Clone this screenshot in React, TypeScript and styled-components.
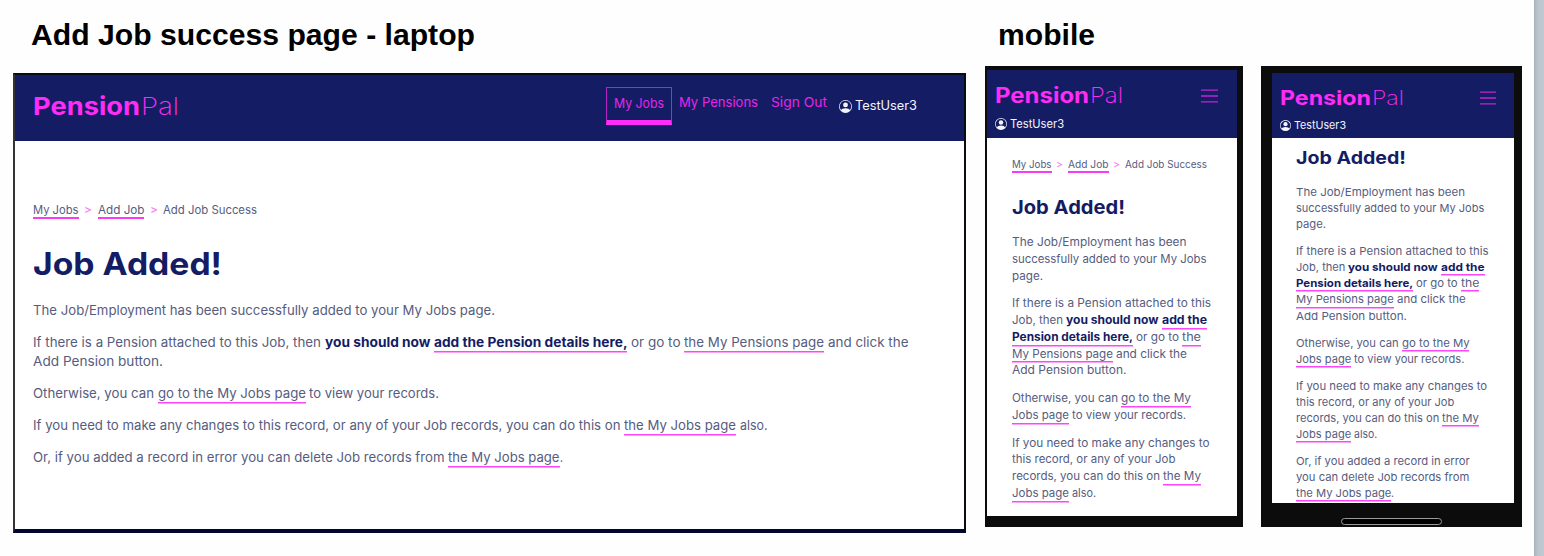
import React, { useLayoutEffect, useRef, useState } from "react";
import styled, { createGlobalStyle } from "styled-components";
import { BsPersonCircle } from "react-icons/bs";

const NAVY = "#141c64";
const PINK = "#ff2bf7";
const INK = "#565c80";

const GlobalStyle = createGlobalStyle`
  * { box-sizing: border-box; }
  body { margin: 0; background: #fefefe; font-family: Inter, sans-serif; overflow: hidden; }
  h1, h2, p { margin: 0; }
`;

const Board = styled.main`
  display: flex;
  width: 1544px;
  height: 556px;
  background: #fefefe;
`;

const Group = styled.section<{ $left: number }>`
  padding-left: ${(p) => p.$left}px;
`;

const Caption = styled.h2<{ $indent: number; $gap: number }>`
  height: ${(p) => p.$gap}px;
  padding: 17px 0 0 ${(p) => p.$indent}px;
  font: 700 30px/36px "Liberation Sans", Arial, sans-serif;
  color: #000;
`;

const Phones = styled.div`
  display: flex;
  gap: 18px;
`;

const SideStrip = styled.div`
  width: 10px;
  margin-left: auto;
  background: linear-gradient(90deg, #a9b2bc, #bcc4ce 40%, #c2c9d3);
`;

const FitBox = styled.span`
  display: inline-block;
  vertical-align: top;
  white-space: pre;
`;

const FitText = styled.span`
  display: inline-block;
  vertical-align: top;
  transform-origin: 0 50%;
`;

/* Widens or narrows a run of text so that it fills the given width. */
function Fit({ w, children }: { w: number; children: string }) {
  const ref = useRef<HTMLSpanElement>(null);
  const [scale, setScale] = useState(1);
  useLayoutEffect(() => {
    const el = ref.current;
    if (!el) return;
    const range = document.createRange();
    range.selectNodeContents(el);
    el.style.transform = "none";
    const natural = range.getBoundingClientRect().width;
    el.style.transform = `scaleX(${w / natural})`;
    setScale(w / natural);
  }, [w, children]);
  return (
    <FitBox style={{ width: w }}>
      <FitText ref={ref} style={{ transform: `scaleX(${scale})` }}>{children}</FitText>
    </FitBox>
  );
}

/* Laptop */

const Laptop = styled.div`
  display: flex;
  flex-direction: column;
  width: 953px;
  height: 460px;
  border: 2px solid #0a0a12;
  border-left-color: #333;
  border-bottom: 4px solid #02052c;
  background: #fff;
`;

const LaptopHeader = styled.header`
  display: flex;
  align-items: flex-start;
  height: 66px;
  padding-left: 18px;
  background: ${NAVY};
  color: ${PINK};
`;

const Brand = styled.div<{ $size: number }>`
  display: flex;
  gap: ${(p) => p.$size * 0.06}px;
  font-size: ${(p) => p.$size}px;
  line-height: 30px;
  font-weight: 200;
  color: ${PINK};

  b { font-weight: 700; }
`;

const LaptopBrand = styled.div`
  width: 573px;
  padding: 16px 0 0;
`;

const Nav = styled.nav`
  display: flex;
  font-size: 13px;
  line-height: 20px;
  color: #e824e8;
`;

const NavItem = styled.a<{ $active?: boolean; $left?: number }>`
  height: ${(p) => (p.$active ? 38 : 30)}px;
  margin-top: 12px;
  margin-left: ${(p) => p.$left ?? 0}px;
  padding: ${(p) => (p.$active ? "5px 7px 0" : "5px 0 0")};
  border: ${(p) => (p.$active ? "1px solid #b423c4" : "0")};
  border-bottom: ${(p) => (p.$active ? `5px solid ${PINK}` : "0")};
`;

const User = styled.div<{ $size: number }>`
  display: flex;
  align-items: center;
  gap: 3px;
  font-size: ${(p) => p.$size}px;
  line-height: 16px;
  color: #f4f4fa;
`;

const LaptopUser = styled.div`
  margin: 23px 0 0 12px;
`;

const PhoneUser = styled.div<{ $top: number }>`
  margin-top: ${(p) => p.$top}px;
`;

const LaptopBody = styled.article`
  padding: 62px 18px 0;
`;

/* Shared copy */

const Crumbs = styled.div<{ $size: number; $gap: number }>`
  display: flex;
  gap: ${(p) => p.$gap}px;
  font-size: ${(p) => p.$size}px;
  line-height: 14px;
  color: ${INK};
`;

const Crumb = styled.span<{ $link?: boolean; $drop: number }>`
  height: ${(p) => 14 + p.$drop}px;
  border-bottom: ${(p) => (p.$link ? "2px solid #f93cf4" : "0")};
`;

const Arrow = styled.span`
  color: #ff6cf6;
`;

const Heading = styled.h1<{ $size: number; $lh: number; $top: number }>`
  margin-top: ${(p) => p.$top}px;
  font-size: ${(p) => p.$size}px;
  line-height: ${(p) => p.$lh}px;
  font-weight: 700;
  color: ${NAVY};
`;

const Copy = styled.div<{ $size: number; $lh: number; $gap: number; $top: number }>`
  display: flex;
  flex-direction: column;
  gap: ${(p) => p.$gap}px;
  margin-top: ${(p) => p.$top}px;
  font-size: ${(p) => p.$size}px;
  line-height: ${(p) => p.$lh}px;
  color: ${INK};
`;

const Line = styled.span<{ $lh: number }>`
  display: flex;
  height: ${(p) => p.$lh}px;
`;

const Run = styled.span<{ $bold?: boolean; $link?: boolean; $gap: number }>`
  height: calc(100% - 1px);
  margin-left: ${(p) => p.$gap}px;
  font-weight: ${(p) => (p.$bold ? 700 : 400)};
  color: ${(p) => (p.$bold ? NAVY : "inherit")};
  box-shadow: ${(p) => (p.$link ? "0 1.5px 0 #ff45fa" : "none")};
`;

type Seg = [text: string, width: number, kind?: "b" | "l" | "bl"];
type Paragraph = Seg[][];

const LAPTOP_COPY: Paragraph[] = [
  [[["The Job/Employment has been successfully added to your My Jobs page.", 462]]],
  [
    [
      ["If there is a Pension attached to this Job, then", 288],
      ["you should now", 105.5, "b"],
      ["add the Pension details here,", 193.5, "bl"],
      ["or go to", 49.5],
      ["the My Pensions page", 140, "l"],
      ["and click the", 80.5],
    ],
    [["Add Pension button.", 130]],
  ],
  [[["Otherwise, you can", 121], ["go to the My Jobs page", 148, "l"], ["to view your records.", 130]]],
  [
    [
      ["If you need to make any changes to this record, or any of your Job records, you can do this on", 587.5],
      ["the My Jobs page", 112, "l"],
      ["also.", 27.5],
    ],
  ],
  [
    [
      ["Or, if you added a record in error you can delete Job records from", 411.5],
      ["the My Jobs page", 111.5, "l"],
      [".", 3],
    ],
  ],
];

const PHONE_COPY: Paragraph[] = [
  [
    [["The Job/Employment has been", 174.5]],
    [["successfully added to your My Jobs", 194.5]],
    [["page.", 31]],
  ],
  [
    [["If there is a Pension attached to this", 199]],
    [["Job, then", 51], ["you should now", 92.5, "b"], ["add the", 45, "bl"]],
    [["Pension details here,", 121, "bl"], ["or go to", 43], ["the", 19, "l"]],
    [["My Pensions page", 101, "l"], ["and click the", 71]],
    [["Add Pension button.", 114.5]],
  ],
  [
    [["Otherwise, you can", 106], ["go to the My", 70, "l"]],
    [["Jobs page", 57, "l"], ["to view your records.", 114]],
  ],
  [
    [["If you need to make any changes to", 197.5]],
    [["this record, or any of your Job", 163.5]],
    [["records, you can do this on", 148], ["the My", 38, "l"]],
    [["Jobs page", 57, "l"], ["also.", 24]],
  ],
];

const PHONE_LAST: Paragraph = [
  [["Or, if you added a record in error", 179.5]],
  [["you can delete Job records from", 179]],
  [["the My Jobs page", 98.5, "l"], [".", 3]],
];

function Paragraphs({ data, lh, gap, scale = 1 }: { data: Paragraph[]; lh: number; gap: number; scale?: number }) {
  return (
    <>
      {data.map((para, i) => (
        <p key={i}>
          {para.map((line, j) => (
            <Line key={j} $lh={lh}>
              {line.map(([text, width, kind], k) => (
                <Run
                  key={k}
                  $bold={kind?.includes("b")}
                  $link={kind?.includes("l")}
                  $gap={k === 0 || text === "." ? 0 : gap}
                >
                  <Fit w={width * scale}>{text}</Fit>
                </Run>
              ))}
            </Line>
          ))}
        </p>
      ))}
    </>
  );
}

function Trail({ size, gap, drop, widths }: { size: number; gap: number; drop: number; widths: number[] }) {
  return (
    <Crumbs $size={size} $gap={gap}>
      <Crumb $link $drop={drop}><Fit w={widths[0]}>My Jobs</Fit></Crumb>
      <Arrow><Fit w={widths[3]}>&gt;</Fit></Arrow>
      <Crumb $link $drop={drop}><Fit w={widths[1]}>Add Job</Fit></Crumb>
      <Arrow><Fit w={widths[3]}>&gt;</Fit></Arrow>
      <Crumb $drop={drop}><Fit w={widths[2]}>Add Job Success</Fit></Crumb>
    </Crumbs>
  );
}

/* Phones */

const PhoneFrame = styled.div<{ $w: number; $pad: string }>`
  display: flex;
  flex-direction: column;
  width: ${(p) => p.$w}px;
  height: 461px;
  padding: ${(p) => p.$pad};
  background: #0c0c0c;
`;

const Screen = styled.div<{ $h: number }>`
  height: ${(p) => p.$h}px;
  overflow: hidden;
  background: #fff;
`;

const PhoneHeader = styled.header<{ $h: number; $pad: string }>`
  height: ${(p) => p.$h}px;
  padding: ${(p) => p.$pad};
  background: ${NAVY};
`;

const TopRow = styled.div`
  display: flex;
  justify-content: space-between;
  align-items: center;
  height: 30px;
`;

const Burger = styled.svg`
  display: block;
  stroke: #c423d0;
  stroke-width: 1.3;
`;

const PhoneBody = styled.article<{ $pad: string }>`
  padding: ${(p) => p.$pad};
`;

const HomeBar = styled.div`
  width: 101px;
  height: 7px;
  margin: 15px auto 0 69px;
  border: 1px solid #9a9a9a;
  border-radius: 4px;
  background: #000;
`;

function Menu({ w }: { w: number }) {
  return (
    <Burger width={w} height="14" viewBox={`0 0 ${w} 14`}>
      <path d={`M0 1.2H${w}M0 7H${w}M0 12.8H${w}`} />
    </Burger>
  );
}

export default function App() {
  return (
    <>
      <GlobalStyle />
      <Board>
        <Group $left={13}>
          <Caption $indent={18} $gap={73}><Fit w={444}>Add Job success page - laptop</Fit></Caption>
          <Laptop>
            <LaptopHeader>
              <LaptopBrand>
                <Brand $size={24.5}><b><Fit w={107}>Pension</Fit></b><Fit w={38}>Pal</Fit></Brand>
              </LaptopBrand>
              <Nav>
                <NavItem $active><Fit w={50}>My Jobs</Fit></NavItem>
                <NavItem $left={7}><Fit w={79}>My Pensions</Fit></NavItem>
                <NavItem $left={13}><Fit w={56}>Sign Out</Fit></NavItem>
              </Nav>
              <LaptopUser>
                <User $size={12.8}><BsPersonCircle size={13} /><Fit w={62}>TestUser3</Fit></User>
              </LaptopUser>
            </LaptopHeader>
            <LaptopBody>
              <Trail size={11.2} gap={5.5} drop={2} widths={[45.5, 46.5, 94, 8]} />
              <Heading $size={31} $lh={36} $top={27}><Fit w={189}>Job Added!</Fit></Heading>
              <Copy $size={13} $lh={19.1} $gap={12.7} $top={19.3}>
                <Paragraphs data={LAPTOP_COPY} lh={19.1} gap={3.7} />
              </Copy>
            </LaptopBody>
          </Laptop>
        </Group>
        <Group $left={19}>
          <Caption $indent={13} $gap={66}><Fit w={97}>mobile</Fit></Caption>
          <Phones>
            <PhoneFrame $w={258} $pad="4px 6px 0 2px">
              <Screen $h={446}>
                <PhoneHeader $h={68} $pad="11px 19px 0 8px">
                  <TopRow>
                    <Brand $size={21}><b><Fit w={94}>Pension</Fit></b><Fit w={33}>Pal</Fit></Brand>
                    <Menu w={17} />
                  </TopRow>
                  <PhoneUser $top={5}>
                    <User $size={11.3}><BsPersonCircle size={12} /><Fit w={54}>TestUser3</Fit></User>
                  </PhoneUser>
                </PhoneHeader>
                <PhoneBody $pad="19px 20px 0 25px">
                  <Trail size={10} gap={4.8} drop={2} widths={[39.5, 40.5, 82, 7]} />
                  <Heading $size={18.7} $lh={24} $top={23}><Fit w={113}>Job Added!</Fit></Heading>
                  <Copy $size={11.3} $lh={16.75} $gap={11} $top={14}>
                    <Paragraphs data={PHONE_COPY} lh={16.75} gap={3} />
                  </Copy>
                </PhoneBody>
              </Screen>
            </PhoneFrame>
            <PhoneFrame $w={261} $pad="7px 8px 0 11px">
              <Screen $h={430}>
                <PhoneHeader $h={65} $pad="10px 18px 0 8px">
                  <TopRow>
                    <Brand $size={20}><b><Fit w={91}>Pension</Fit></b><Fit w={32}>Pal</Fit></Brand>
                    <Menu w={16} />
                  </TopRow>
                  <PhoneUser $top={4}>
                    <User $size={11}><BsPersonCircle size={11} /><Fit w={52}>TestUser3</Fit></User>
                  </PhoneUser>
                </PhoneHeader>
                <PhoneBody $pad="0 20px 0 24px">
                  <Heading $size={18} $lh={24} $top={8}><Fit w={110}>Job Added!</Fit></Heading>
                  <Copy $size={11} $lh={16.1} $gap={10.9} $top={14}>
                    <Paragraphs data={[...PHONE_COPY, PHONE_LAST]} lh={16.1} gap={3.1} scale={0.968} />
                  </Copy>
                </PhoneBody>
              </Screen>
              <HomeBar />
            </PhoneFrame>
          </Phones>
        </Group>
        <SideStrip />
      </Board>
    </>
  );
}
